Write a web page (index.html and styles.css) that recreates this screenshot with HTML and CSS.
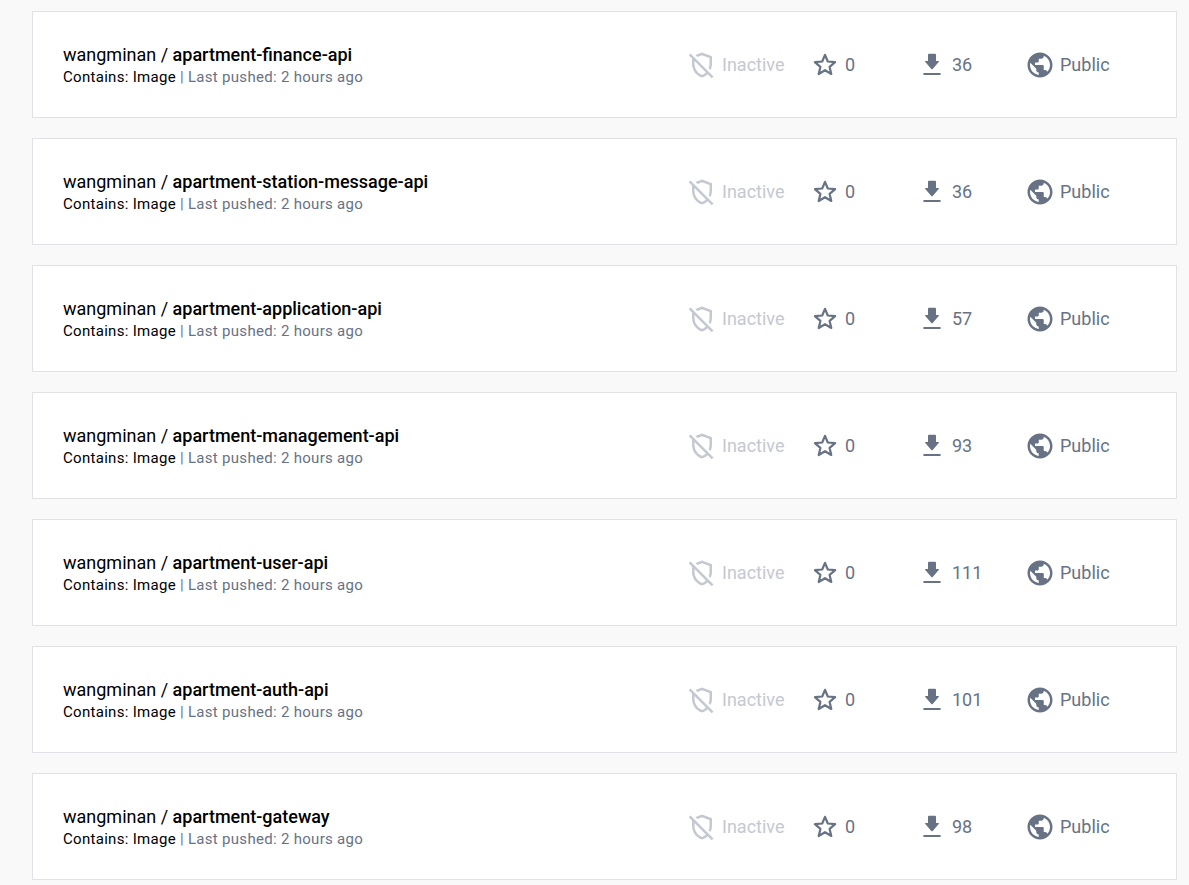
FILE: index.html
```html
<!DOCTYPE html>
<html lang="en">
<head>
<meta charset="utf-8">
<title>Repositories</title>
<link rel="stylesheet" href="styles.css">
</head>
<body>
<svg class="sprite" aria-hidden="true">
<symbol id="shield" viewBox="0 0 24 24"><path d="M12 4.14l6 2.25v4.7c0 1.19-.23 2.36-.64 3.44l1.51 1.51c.72-1.53 1.13-3.22 1.13-4.95V5l-8-3-5.22 1.96 1.55 1.55L12 4.14zM2.81 2.81L1.39 4.22 4 6.83v4.26c0 5.05 3.41 9.76 8 10.91 1.72-.43 3.28-1.36 4.55-2.62l3.23 3.23 1.41-1.41L2.81 2.81zM12 19.92c-3.45-1.13-6-4.82-6-8.83V8.83l9.14 9.14c-.9.9-1.98 1.59-3.14 1.95z"/></symbol>
<symbol id="star" viewBox="0 0 26 26"><path d="M13 2.8l2.8 6.7 7.3.6-5.5 4.8 1.7 7.1-6.3-3.8-6.3 3.8 1.7-7.1-5.5-4.8 7.300-.6z" fill="none" stroke="currentColor" stroke-width="2.200" stroke-linejoin="round"/></symbol>
<symbol id="download" viewBox="0 0 30 30"><path d="M12 3.700h6q1 0 1 1V11h2.200q1.400 0 .5 1.100l-6 6.900q-.7.700-1.400 0l-6-6.900q-.9-1.100.5-1.100H11V4.700q0-1 1-1zM7.200 23h15.600q1 0 1 1t-1 1H7.200q-1 0-1-1t1-1z"/></symbol>
<symbol id="globe" viewBox="0 0 24 24"><path d="M12 2C6.480 2 2 6.480 2 12s4.480 10 10 10 10-4.480 10-10S17.520 2 12 2zm-1 17.930c-3.950-.490-7-3.850-7-7.930 0-.620.080-1.210.210-1.790L9 15v1c0 1.100.900 2 2 2v1.930zm6.900-2.540c-.260-.810-1-1.390-1.900-1.390h-1v-3c0-.550-.450-1-1-1H8v-2h2c.550 0 1-.450 1-1V7h2c1.100 0 2-.900 2-2v-.410c2.930 1.190 5 4.060 5 7.410 0 2.080-.800 3.970-2.100 5.390z"/></symbol>
</svg>
<main class="repos" id="repos"></main>
<template id="card">
<article class="repo">
<div class="info"><h2 class="title">wangminan / <strong class="name"></strong></h2>
<p class="meta"><span class="contains">Contains: Image</span> | Last pushed: 2 hours ago</p></div>
<div class="stat scan"><svg class="icon"><use href="#shield"/></svg>Inactive</div>
<div class="stat stars"><svg class="icon icon-star"><use href="#star"/></svg>0</div>
<div class="stat pulls"><svg class="icon"><use href="#download"/></svg><span class="count"></span></div>
<div class="stat access"><svg class="icon"><use href="#globe"/></svg>Public</div>
</article>
</template>
<script src="script.js"></script>
</body>
</html>
```
FILE: styles.css
```css
* { box-sizing: border-box; }
body {
  margin: 0;
  background: #f9f9f9;
  color: #000;
  font-family: Roboto, "Liberation Sans", sans-serif;
}
.sprite { display: none; }
.repos {
  display: flex;
  flex-direction: column;
  gap: 20px;
  padding: 11px 12px 5px 32px;
}
.repo {
  display: grid;
  grid-template-columns: minmax(0, 1fr) 125px 105px 108px 121px;
  align-items: center;
  padding: 30px;
  border: 1px solid #e1e2e6;
  background: #fff;
}
.info { padding-top: 1px; }
.title {
  margin: 0;
  font-size: 18px;
  line-height: 24px;
  font-weight: 400;
}
.name { font-weight: 500; }
.meta {
  margin: 0;
  color: #677285;
  font-size: 15px;
  line-height: 20px;
  letter-spacing: 0.02em;
}
.contains { color: #000; }
.stat {
  display: flex;
  align-items: center;
  gap: 5px;
  color: #677285;
  font-size: 18px;
  line-height: 24px;
}
.scan { color: #c4c8d1; }
.stars { gap: 7px; }
.icon {
  flex: none;
  width: 30px;
  height: 30px;
  fill: currentColor;
}
.icon-star {
  width: 26px;
  height: 26px;
}
```
FILE: script.js
```js
const repos = [
  ["apartment-finance-api", 36],
  ["apartment-station-message-api", 36],
  ["apartment-application-api", 57],
  ["apartment-management-api", 93],
  ["apartment-user-api", 111],
  ["apartment-auth-api", 101],
  ["apartment-gateway", 98],
];
const list = document.getElementById("repos");
const template = document.getElementById("card");
for (const [name, pulls] of repos) {
  const card = template.content.cloneNode(true);
  card.querySelector(".name").textContent = name;
  card.querySelector(".count").textContent = pulls;
  list.append(card);
}
```
